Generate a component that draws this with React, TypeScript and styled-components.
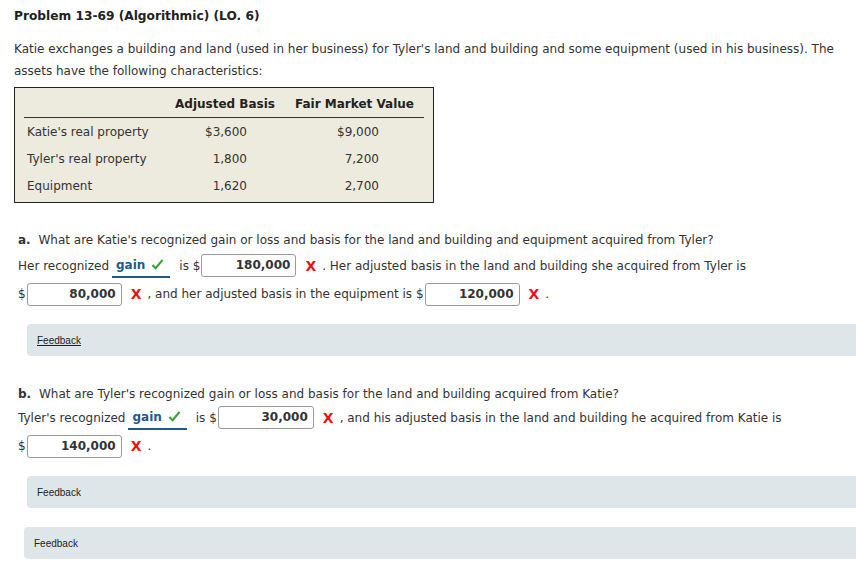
import styled, { createGlobalStyle } from "styled-components";

const GlobalStyle = createGlobalStyle`
  body {
    margin: 0;
    background: #ffffff;
    font-family: "DejaVu Sans", Verdana, sans-serif;
    color: #333333;
  }
`;

const Page = styled.div`
  padding: 9px 0 0 14px;
  font-size: 12px;
`;

const Title = styled.div`
  font-weight: bold;
  font-size: 12.2px;
  color: #222222;
  margin-bottom: 15px;
`;

const Intro = styled.p`
  margin: 0 0 5px 0;
  line-height: 22px;
  padding-right: 14px;
`;

const Table = styled.table`
  background: #ecebde;
  border: 1px solid #222222;
  border-collapse: separate;
  border-spacing: 0;
  width: 420px;
  table-layout: fixed;
  padding: 3px 9px 3px 9px;
`;

const HeadCell = styled.th<{ $w: number }>`
  width: ${(p) => p.$w}px;
  font-weight: bold;
  text-align: center;
  padding: 6px 0 6px 0;
  border-bottom: 1px solid #333333;
  color: #222222;
  white-space: nowrap;
`;

const Cell = styled.td<{ $pad?: number }>`
  text-align: ${(p) => (p.$pad !== undefined ? "right" : "left")};
  padding: 6px ${(p) => p.$pad ?? 0}px 5px ${(p) => (p.$pad !== undefined ? 0 : 3)}px;
  line-height: 16px;
  white-space: nowrap;
`;

const Question = styled.div<{ $top: number }>`
  margin-top: ${(p) => p.$top}px;
  line-height: 20px;
  padding-left: 4px;
`;

const Line = styled.div<{ $h: number }>`
  display: flex;
  align-items: center;
  height: ${(p) => p.$h}px;
  padding-left: 4px;
  white-space: nowrap;
`;

const Letter = styled.b`
  margin-right: 4px;
`;

const Choice = styled.span`
  display: inline-flex;
  align-items: center;
  gap: 6px;
  margin: 0 9px 0 3px;
  padding: 0 6px 0 4px;
  height: 22px;
  border-bottom: 2px solid #1a5b92;
  color: #1a5b92;
  font-weight: bold;
`;

const Check = styled.svg`
  width: 13px;
  height: 13px;
`;

const Amount = styled.span<{ $w: number }>`
  display: inline-block;
  box-sizing: border-box;
  width: ${(p) => p.$w}px;
  height: 23px;
  line-height: 21px;
  margin-left: 1px;
  border: 1px solid #9a9a9a;
  border-radius: 3px;
  text-align: right;
  padding-right: 5px;
  font-weight: bold;
  color: #333333;
  background: #ffffff;
`;

const Wrong = styled.span`
  color: #ee1111;
  font-weight: bold;
  font-size: 14px;
  margin: 0 6px 0 9px;
`;

const Feedback = styled.div<{ $indent: number; $top: number }>`
  margin: ${(p) => p.$top}px 0 0 ${(p) => p.$indent}px;
  height: 32px;
  display: flex;
  align-items: center;
  padding-left: 10px;
  background: #dfe6e9;
  border-radius: 4px 0 0 4px;
  font-family: "Liberation Sans", Arial, sans-serif;
  font-size: 10px;
  color: #222222;
`;

const FeedbackLink = styled.span<{ $underline?: boolean }>`
  text-decoration: ${(p) => (p.$underline ? "underline" : "none")};
`;

const CheckMark = () => (
  <Check viewBox="0 0 14 14">
    <path d="M1.5 7.5 L5 11 L12.5 2" fill="none" stroke="#3aa23a" strokeWidth="2.4" />
  </Check>
);

const Gain = () => (
  <Choice>
    gain
    <CheckMark />
  </Choice>
);

const X = () => <Wrong>X</Wrong>;

export default function App() {
  return (
    <>
      <GlobalStyle />
      <Page>
        <Title>Problem 13-69 (Algorithmic) (LO. 6)</Title>
        <Intro>
          Katie exchanges a building and land (used in her business) for Tyler's land and building and
          some equipment (used in his business). The assets have the following characteristics:
        </Intro>
        <Table>
          <thead>
            <tr>
              <HeadCell $w={141}></HeadCell>
              <HeadCell $w={120}>Adjusted Basis</HeadCell>
              <HeadCell $w={139}>Fair Market Value</HeadCell>
            </tr>
          </thead>
          <tbody>
            <tr>
              <Cell>Katie's real property</Cell>
              <Cell $pad={38}>$3,600</Cell>
              <Cell $pad={45}>$9,000</Cell>
            </tr>
            <tr>
              <Cell>Tyler's real property</Cell>
              <Cell $pad={38}>1,800</Cell>
              <Cell $pad={45}>7,200</Cell>
            </tr>
            <tr>
              <Cell>Equipment</Cell>
              <Cell $pad={38}>1,620</Cell>
              <Cell $pad={45}>2,700</Cell>
            </tr>
          </tbody>
        </Table>

        <Question $top={27}>
          <Letter>a.</Letter> What are Katie's recognized gain or loss and basis for the land and building
          and equipment acquired from Tyler?
        </Question>
        <Line $h={31}>
          Her recognized <Gain /> is $<Amount $w={95}>180,000</Amount>
          <X />. Her adjusted basis in the land and building she acquired from Tyler is
        </Line>
        <Line $h={26}>
          $<Amount $w={95}>80,000</Amount>
          <X />, and her adjusted basis in the equipment is $<Amount $w={95}>120,000</Amount>
          <X />.
        </Line>
        <Feedback $indent={13} $top={17}>
          <FeedbackLink $underline>Feedback</FeedbackLink>
        </Feedback>

        <Question $top={28}>
          <Letter>b.</Letter> What are Tyler's recognized gain or loss and basis for the land and building
          acquired from Katie?
        </Question>
        <Line $h={27}>
          Tyler's recognized <Gain /> is $<Amount $w={96}>30,000</Amount>
          <X />, and his adjusted basis in the land and building he acquired from Katie is
        </Line>
        <Line $h={30}>
          $<Amount $w={95}>140,000</Amount>
          <X />.
        </Line>
        <Feedback $indent={13} $top={15}>
          <FeedbackLink>Feedback</FeedbackLink>
        </Feedback>
        <Feedback $indent={10} $top={19}>
          <FeedbackLink>Feedback</FeedbackLink>
        </Feedback>
      </Page>
    </>
  );
}
